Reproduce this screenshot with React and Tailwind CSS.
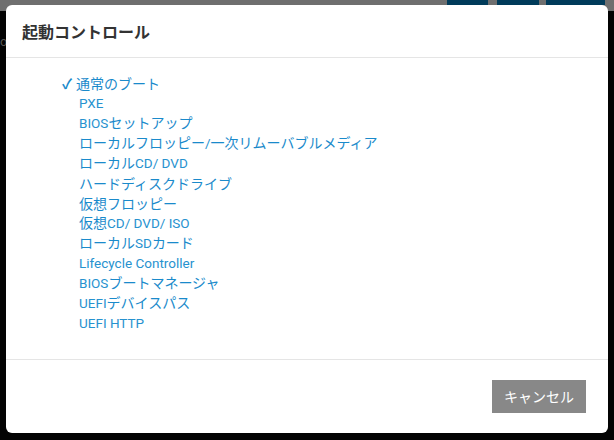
const items = [
  "通常のブート",
  "PXE",
  "BIOSセットアップ",
  "ローカルフロッピー/一次リムーバブルメディア",
  "ローカルCD/ DVD",
  "ハードディスクドライブ",
  "仮想フロッピー",
  "仮想CD/ DVD/ ISO",
  "ローカルSDカード",
  "Lifecycle Controller",
  "BIOSブートマネージャ",
  "UEFIデバイスパス",
  "UEFI HTTP",
];

// Latin runs are set a touch smaller than the Japanese ones, like the original.
function Label({ text }) {
  const parts = text.split(/([\x20-\x7E]+)/).filter(Boolean);
  return (
    <span>
      {parts.map((p, i) =>
        /^[\x20-\x7E]+$/.test(p) ? (
          <span key={i} className="text-[13.5px] font-['Roboto','Noto_Sans_CJK_JP',sans-serif] text-[#2792cf]">
            {p.replace(/ /g, "\u00a0")}
          </span>
        ) : (
          <span key={i}>{p}</span>
        )
      )}
    </span>
  );
}

export default function App() {
  return (
    <div className="relative w-[614px] h-[440px] overflow-hidden bg-[#030303] font-['Noto_Sans_CJK_JP','Noto_Sans',sans-serif]">
      <div className="flex h-[11px] bg-[#6f6f6f]">
        <div className="ml-[447px] h-[5px] w-[41px] bg-[#003b5a]" />
        <div className="ml-[9px] h-[5px] w-[42px] bg-[#003b5a]" />
        <div className="ml-[7px] h-[5px] w-[59px] bg-[#003b5a]" />
      </div>
      <div className="pt-[24px] text-[12px] leading-none text-[#555]">o:</div>

      <div className="absolute left-[6px] top-[5px] flex h-[428px] w-[602px] flex-col rounded-[6px] bg-white">
        <div className="flex h-[53px] items-center border-b border-[#e5e5e5] px-[16px]">
          <h2 className="text-[16px] font-semibold leading-none text-[#333]">起動コントロール</h2>
        </div>

        <ul className="h-[301px] pt-[15px] pl-[73px] text-[14px] text-[#1a8acb]">
          {items.map((t, i) => (
            <li key={t} className="flex h-[20px] items-center leading-none whitespace-nowrap">
              {i === 0 ? (
                <span className="-ml-[17px] flex items-center">
                  <span className="w-[14px] text-[14px] font-bold">✓</span>
                  <Label text={t} />
                </span>
              ) : (
                <Label text={t} />
              )}
            </li>
          ))}
        </ul>

        <div className="flex flex-1 items-start justify-end border-t border-[#e5e5e5] pt-[20px] pr-[22px]">
          <button className="h-[33px] w-[94px] bg-[#888888] text-[14px] text-white">キャンセル</button>
        </div>
      </div>
    </div>
  );
}
